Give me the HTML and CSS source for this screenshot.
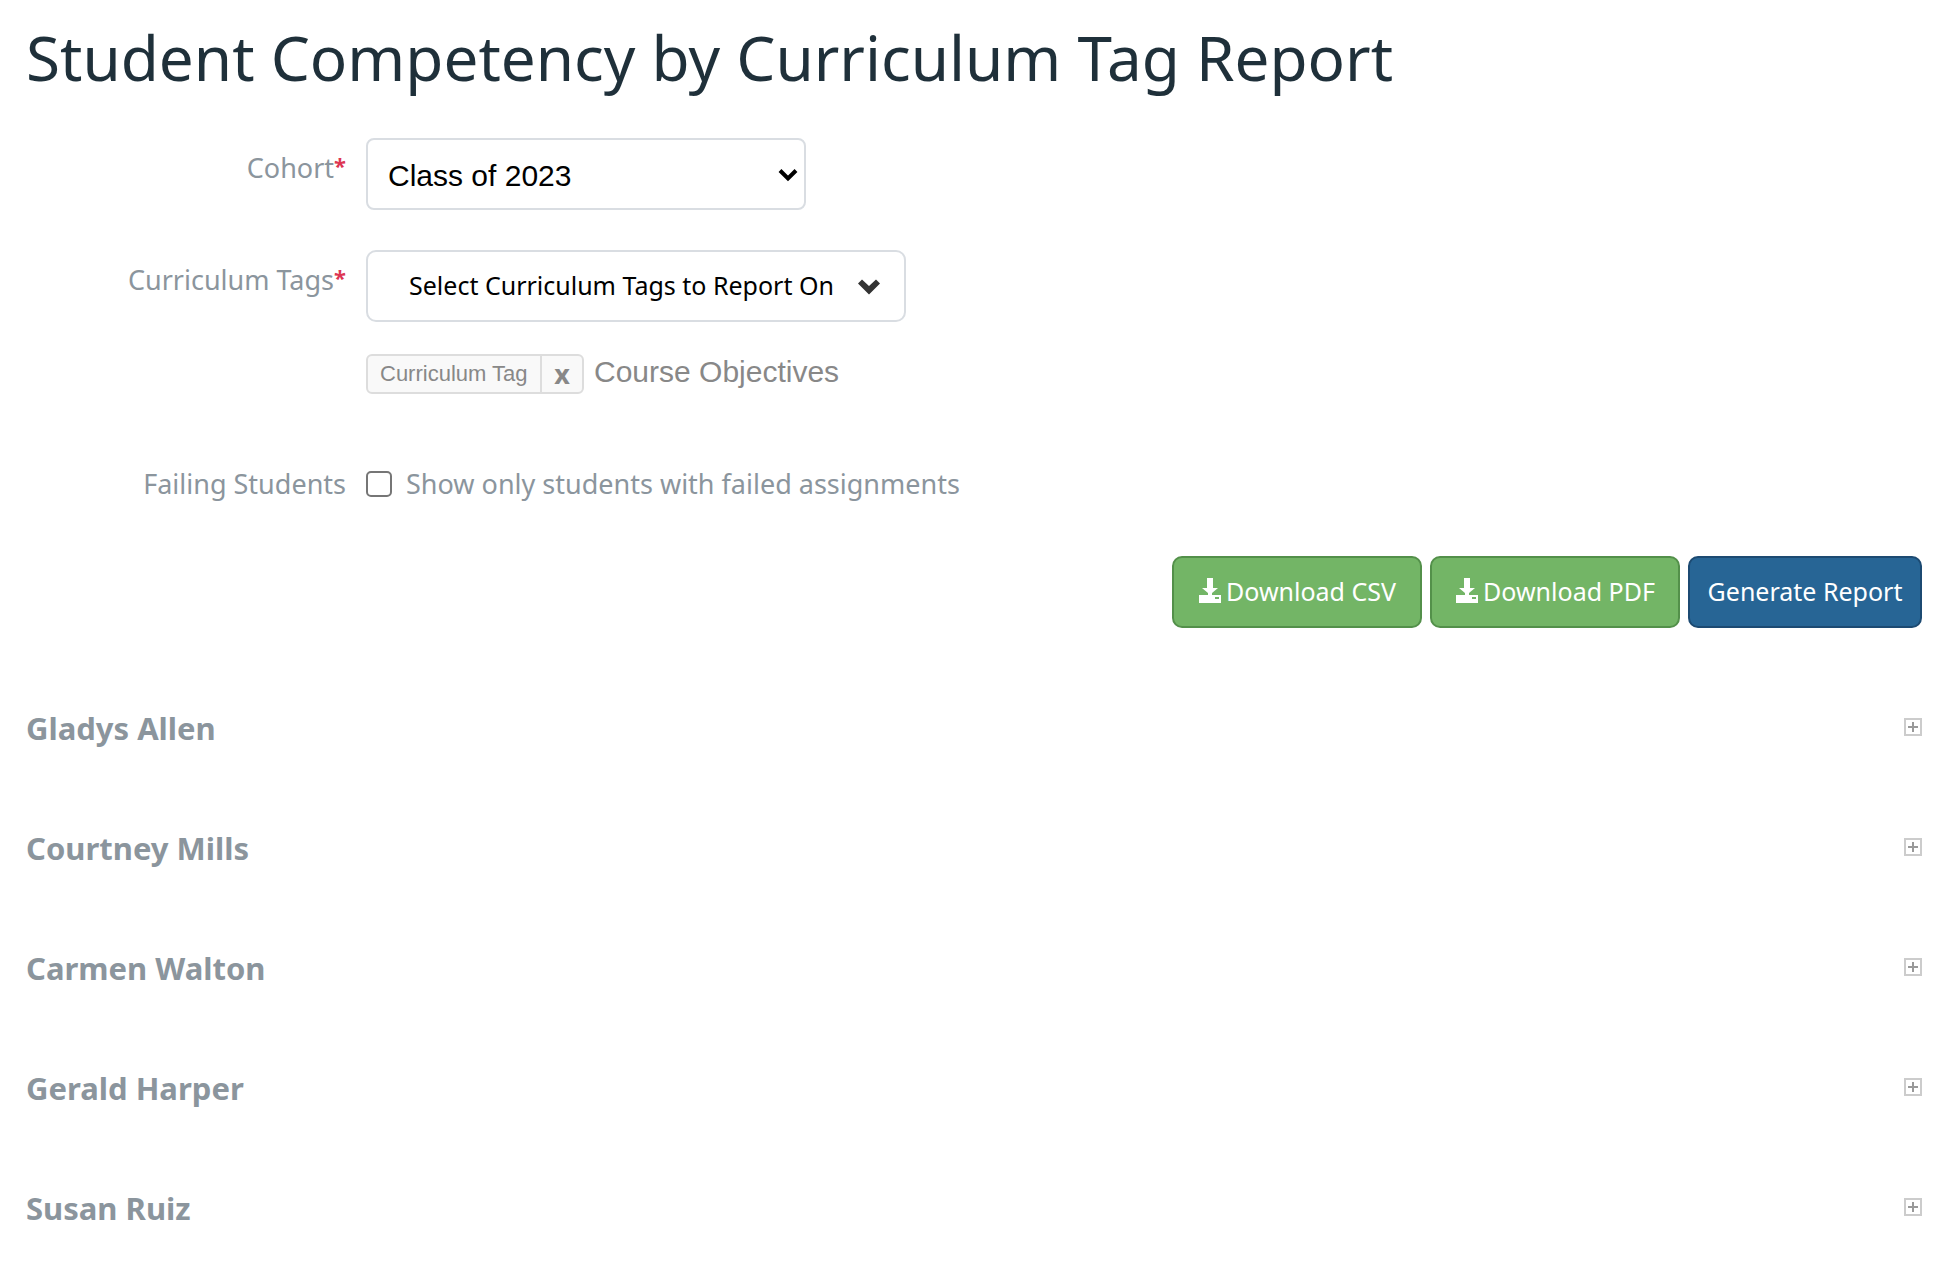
FILE: index.html
```html
<!doctype html>
<html lang="en">
<head>
<meta charset="UTF-8">
<meta name="viewport" content="width=device-width, initial-scale=1">
<title>Student Competency by Curriculum Tag Report</title>
<link rel="stylesheet" href="styles.css">
</head>
<body>
<h1>Student Competency by Curriculum Tag Report</h1>

<form class="report-form" action="#" method="get">
	<div class="control-group">
		<label class="control-label" for="cohort">Cohort<span class="required">*</span></label>
		<div class="controls select-wrap">
			<select id="cohort" name="cohort">
				<option selected>Class of 2023</option>
			</select>
			<svg class="select-arrow" viewBox="0 0 20 14" aria-hidden="true"><path d="M2 2.5l8 8 8-8" fill="none" stroke="#000" stroke-width="4"/></svg>
		</div>
	</div>

	<div class="control-group">
		<label class="control-label" for="choose-tags">Curriculum Tags<span class="required">*</span></label>
		<div class="controls">
			<button type="button" id="choose-tags" class="btn btn-search">
				Select Curriculum Tags to Report On
				<svg class="icon-chevron" viewBox="0 0 24 18" aria-hidden="true"><path d="M5 1.500l7 6.500 7-6.500 4 4-11 11-11-11z" fill="#333"/></svg>
			</button>
			<div class="selected-tags">
				<span class="selected-tag"><span class="tag-type">Curriculum Tag</span><button type="button" class="tag-remove" aria-label="Remove Course Objectives">x</button></span>
				<span class="tag-name">Course Objectives</span>
			</div>
		</div>
	</div>

	<div class="control-group failing">
		<span class="control-label">Failing Students</span>
		<label class="controls checkbox"><input type="checkbox" name="failing">Show only students with failed assignments</label>
	</div>

	<div class="form-actions">
		<button type="button" class="btn btn-success"><svg class="icon-download" viewBox="0 0 24 26" aria-hidden="true"><path d="M9 0h6v10h5l-6 5v2h9v8H1v-8h9v-2l-6-5h5z M17 19v2h4v-2z" fill="#fff" fill-rule="evenodd"/></svg>Download CSV</button>
		<button type="button" class="btn btn-success"><svg class="icon-download" viewBox="0 0 24 26" aria-hidden="true"><path d="M9 0h6v10h5l-6 5v2h9v8H1v-8h9v-2l-6-5h5z M17 19v2h4v-2z" fill="#fff" fill-rule="evenodd"/></svg>Download PDF</button>
		<button type="submit" class="btn btn-primary">Generate Report</button>
	</div>
</form>

<div class="students">
	<h2>Gladys Allen <button type="button" class="toggle" aria-label="Expand Gladys Allen"></button></h2>
	<h2>Courtney Mills <button type="button" class="toggle" aria-label="Expand Courtney Mills"></button></h2>
	<h2>Carmen Walton <button type="button" class="toggle" aria-label="Expand Carmen Walton"></button></h2>
	<h2>Gerald Harper <button type="button" class="toggle" aria-label="Expand Gerald Harper"></button></h2>
	<h2>Susan Ruiz <button type="button" class="toggle" aria-label="Expand Susan Ruiz"></button></h2>
</div>
</body>
</html>
```

FILE: styles.css
```css
* {box-sizing: border-box;}
body {margin: 0;padding: 20px 30px 0 26px;background: #fff;color: #8b959d;font-family: "Lucida Grande", "Noto Sans", sans-serif;font-size: 27px;line-height: 40px;}
h1, h2 {margin: 0;}
h1 {margin-bottom: 44px;color: #1f303a;font-size: 62px;font-weight: 400;line-height: 74px;}
button, select, input {margin: 0;font-family: inherit;}

/* form rows */
.control-group {display: flex;gap: 20px;margin-bottom: 40px;}
.control-label {flex: none;width: 320px;padding-top: 10px;text-align: right;}
.required {color: #dd3652;font-size: 22px;font-weight: 700;line-height: 20px;vertical-align: 4px;}
.failing {align-items: center;margin: 70px 0 52px;}
.failing .control-label {padding-top: 0;}

/* cohort select */
.select-wrap {position: relative;width: 440px;}
.select-wrap select {display: block;width: 100%;height: 72px;padding: 2px 40px 0 20px;border: 2px solid #d9dde2;border-radius: 8px;background: #fff;color: #000;font-family: "Liberation Sans", Arial, sans-serif;font-size: 30px;appearance: none;}
.select-arrow {position: absolute;top: 30px;right: 8px;width: 20px;height: 14px;pointer-events: none;}

/* buttons */
.btn {display: inline-flex;align-items: center;justify-content: center;height: 72px;padding: 0 20px 2px;border: 2px solid;border-radius: 10px;font-size: 25px;line-height: 40px;white-space: nowrap;cursor: pointer;}
.btn-search {justify-content: flex-start;width: 540px;padding-left: 41px;border-color: #d9dde2;background: #fff;color: #000;}
.btn-success {min-width: 250px;border-color: #53904a;background: #73b566;color: #fff;}
.btn-primary {width: 234px;border-color: #1c4a72;background: #276595;color: #fff;}
.icon-chevron {flex: none;width: 24px;height: 18px;margin: 4px 0 0 23px;}
.icon-download {flex: none;width: 24px;height: 26px;margin-right: 4px;}

/* selected tags */
.selected-tags {display: flex;align-items: flex-start;gap: 10px;margin-top: 32px;font-family: "Liberation Sans", Arial, sans-serif;color: #888;}
.selected-tag {display: flex;height: 40px;border: 2px solid #ddd;border-radius: 6px;background: #f9f9f9;font-size: 22px;line-height: 36px;}
.tag-type {width: 174px;padding-left: 12px;border-right: 2px solid #ddd;}
.tag-remove {width: 40px;padding: 0;border: 0;background: none;color: #888;font-family: "Noto Sans", sans-serif;font-size: 27px;font-weight: 700;line-height: 32px;cursor: pointer;}
.tag-name {font-size: 30px;line-height: 36px;}

.checkbox {display: flex;align-items: center;gap: 14px;}
.checkbox input {width: 26px;height: 26px;border: 2px solid #767676;border-radius: 5px;background: #fff;appearance: none;}
.checkbox input:checked {background: #276595;}

.form-actions {display: flex;justify-content: flex-end;gap: 8px;}

/* student list */
.students {padding-top: 70px;}
.students h2 {display: flex;align-items: center;justify-content: space-between;margin-bottom: 60px;font-size: 31px;line-height: 60px;}
.toggle {width: 18px;height: 18px;margin-bottom: 2px;padding: 0;border: 2px solid #ccc;background: linear-gradient(#999, #999) center / 10px 2px no-repeat, linear-gradient(#999, #999) center / 2px 10px no-repeat;cursor: pointer;}
```
